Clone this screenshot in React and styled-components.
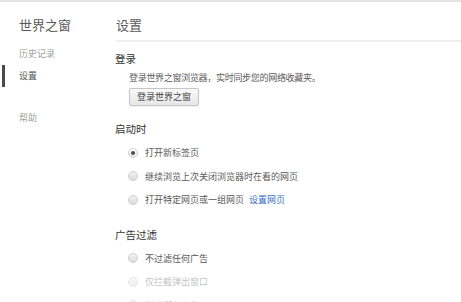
import React from "react";
import styled, { createGlobalStyle } from "styled-components";

const Global = createGlobalStyle`
  html, body { margin: 0; padding: 0; background: #fff; }
  body { font-family: "Noto Sans CJK SC", "Noto Sans", sans-serif; color: #555; }
`;

const Page = styled.div`
  display: flex;
  border-top: 2px solid #e3e3e3;
  min-height: 300px;
  overflow: hidden;
`;

const Sidebar = styled.aside`
  width: 115px;
  flex: none;
  padding-top: 15px;
  display: flex;
  flex-direction: column;
`;

const Brand = styled.div`
  padding-left: 19px;
  font-size: 13px;
  line-height: 15px;
  color: #5a5a5a;
  margin-bottom: 11px;
`;

const NavList = styled.nav`
  display: flex;
  flex-direction: column;
`;

const NavItem = styled.div`
  height: 22px;
  line-height: 22px;
  font-size: 9px;
  margin-left: 2px;
  padding-left: 14px;
  border-left: 3px solid ${(p) => (p.$active ? "#4a4a4a" : "transparent")};
  color: ${(p) => (p.$active ? "#555" : "#a0a0a0")};
  margin-top: ${(p) => p.$gap || 0}px;
`;

const Main = styled.main`
  flex: 1;
  display: flex;
  flex-direction: column;
`;

const Header = styled.div`
  padding-top: 15px;
  padding-left: 1px;
  padding-bottom: 8px;
  border-bottom: 2px solid #f0f0f0;
  font-size: 13px;
  line-height: 15px;
  color: #5a5a5a;
`;

const Section = styled.section`
  display: flex;
  flex-direction: column;
  margin-top: ${(p) => p.$top}px;
`;

const SectionTitle = styled.h2`
  margin: 0 0 4px 0;
  font-size: 10.5px;
  line-height: 16px;
  font-weight: normal;
  color: #333;
`;

const Body = styled.div`
  padding-left: 14px;
  display: flex;
  flex-direction: column;
  align-items: flex-start;
`;

const Desc = styled.div`
  font-size: 9px;
  line-height: 14px;
  color: #5a5a5a;
  margin-bottom: 3px;
  white-space: nowrap;
  letter-spacing: -0.3px;
`;

const Button = styled.button`
  height: 18px;
  padding: 0 7px;
  font-family: inherit;
  font-size: 9px;
  line-height: 16px;
  color: #444;
  background: linear-gradient(#fafafa, #e6e6e6);
  border: 1px solid #c6c6c6;
  border-radius: 2px;
  box-shadow: 0 1px 1px rgba(0, 0, 0, 0.06);
`;

const RadioRow = styled.label`
  height: 23.5px;
  display: flex;
  align-items: center;
  gap: 7px;
  font-size: 9px;
  white-space: nowrap;
  color: ${(p) => (p.$disabled ? "#c4c4c4" : "#5a5a5a")};
`;

const RadioDot = styled.span`
  width: 10px;
  height: 10px;
  box-sizing: border-box;
  border-radius: 50%;
  flex: none;
  display: flex;
  align-items: center;
  justify-content: center;
  margin-left: -1px;
  border: 1px solid ${(p) => (p.$disabled ? "#e6e6e6" : "#cfcfcf")};
  background: ${(p) =>
    p.$checked
      ? "linear-gradient(#ffffff, #e9e9e9)"
      : p.$disabled
      ? "linear-gradient(#f8f8f8, #eeeeee)"
      : "linear-gradient(#f2f2f2, #dcdcdc)"};
  &::after {
    content: "";
    display: ${(p) => (p.$checked ? "block" : "none")};
    width: 4px;
    height: 4px;
    border-radius: 50%;
    background: #4d4d4d;
  }
`;

const Link = styled.span`
  color: #3a6cc6;
  margin-left: 5px;
`;

function Radio({ checked, disabled, children }) {
  return (
    <RadioRow $disabled={disabled}>
      <RadioDot $checked={checked} $disabled={disabled} />
      <span>{children}</span>
    </RadioRow>
  );
}

export default function App() {
  return (
    <>
      <Global />
      <Page>
        <Sidebar>
          <Brand>世界之窗</Brand>
          <NavList>
            <NavItem>历史记录</NavItem>
            <NavItem $active>设置</NavItem>
            <NavItem $gap={20}>帮助</NavItem>
          </NavList>
        </Sidebar>
        <Main>
          <Header>设置</Header>
          <Section $top={9}>
            <SectionTitle>登录</SectionTitle>
            <Body>
              <Desc>登录世界之窗浏览器，实时同步您的网络收藏夹。</Desc>
              <Button>登录世界之窗</Button>
            </Body>
          </Section>
          <Section $top={15}>
            <SectionTitle>启动时</SectionTitle>
            <Body>
              <Radio checked>打开新标签页</Radio>
              <Radio>继续浏览上次关闭浏览器时在看的网页</Radio>
              <Radio>
                打开特定网页或一组网页<Link>设置网页</Link>
              </Radio>
            </Body>
          </Section>
          <Section $top={15}>
            <SectionTitle>广告过滤</SectionTitle>
            <Body>
              <Radio>不过滤任何广告</Radio>
              <Radio disabled>仅拦截弹出窗口</Radio>
              <Radio disabled>拦截所有广告</Radio>
            </Body>
          </Section>
        </Main>
      </Page>
    </>
  );
}
